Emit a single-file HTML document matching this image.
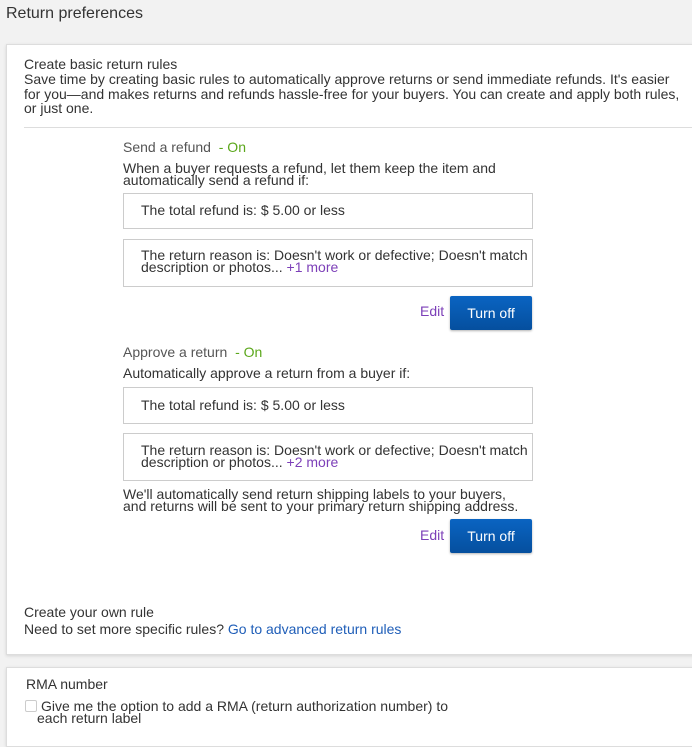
<!DOCTYPE html>
<html><head><meta charset="utf-8"><style>
*{margin:0;padding:0;box-sizing:border-box}
body{width:692px;height:734px;overflow:hidden;background:#f2f2f2;font-family:"Liberation Sans",Arial,sans-serif;font-size:14px;color:#333;position:relative}
.a{position:absolute;white-space:nowrap;line-height:16px}
.panel{position:absolute;left:6px;right:-10px;background:#fff;border:1px solid #ddd;box-shadow:0 1px 3px rgba(0,0,0,.12)}
.box{position:absolute;left:123px;width:410px;border:1px solid #ccc;background:#fff}
.btn{position:absolute;left:450px;width:82px;height:34px;background:linear-gradient(#0a64c2,#054f9e);color:#fff;font-size:14px;line-height:34px;text-align:center;border-radius:2px;box-shadow:0 1px 2px rgba(0,0,0,.3)}
.edit{color:#7c3fb8}
.on{color:#5ba71b}
.tight{line-height:12px}
</style></head><body>
<div class="a" style="left:6px;top:6px;font-size:16px;color:#333">Return preferences</div>
<div class="panel" style="top:44px;height:611px"></div>
<div class="a" style="left:24px;top:56px">Create basic return rules</div>
<div class="a" style="left:24px;top:72px;line-height:14.5px">Save time by creating basic rules to automatically approve returns or send immediate refunds. It's easier<br>for you—and makes returns and refunds hassle-free for your buyers. You can create and apply both rules,<br>or just one.</div>
<div style="position:absolute;left:24px;right:0;top:127px;height:1px;background:#ddd"></div>

<div class="a" style="left:123px;top:139px;color:#555">Send a refund &nbsp;<span class="on">- On</span></div>
<div class="a tight" style="left:123px;top:162px">When a buyer requests a refund, let them keep the item and<br>automatically send a refund if:</div>
<div class="box" style="top:193px;height:36px"></div>
<div class="a" style="left:141px;top:202px">The total refund is: $ 5.00 or less</div>
<div class="box" style="top:239px;height:48px"></div>
<div class="a tight" style="left:141px;top:249px">The return reason is: Doesn't work or defective; Doesn't match<br>description or photos... <span class="edit">+1 more</span></div>
<div class="a edit" style="left:420px;top:303px">Edit</div>
<div class="btn" style="top:296px">Turn off</div>

<div class="a" style="left:123px;top:344px;color:#555">Approve a return &nbsp;<span class="on">- On</span></div>
<div class="a" style="left:123px;top:365px">Automatically approve a return from a buyer if:</div>
<div class="box" style="top:387px;height:37px"></div>
<div class="a" style="left:141px;top:397px">The total refund is: $ 5.00 or less</div>
<div class="box" style="top:433px;height:48px"></div>
<div class="a tight" style="left:141px;top:444px">The return reason is: Doesn't work or defective; Doesn't match<br>description or photos... <span class="edit">+2 more</span></div>
<div class="a tight" style="left:123px;top:488px">We'll automatically send return shipping labels to your buyers,<br>and returns will be sent to your primary return shipping address.</div>
<div class="a edit" style="left:420px;top:527px">Edit</div>
<div class="btn" style="top:519px">Turn off</div>

<div class="a" style="left:24px;top:604px">Create your own rule</div>
<div class="a" style="left:24px;top:621px">Need to set more specific rules? <span style="color:#1f5eb8">Go to advanced return rules</span></div>

<div class="panel" style="top:667px;height:80px"></div>
<div class="a" style="left:26px;top:676px">RMA number</div>
<div style="position:absolute;left:25px;top:700px;width:12px;height:12px;border:1px solid #ccc;border-radius:2px"></div>
<div class="a tight" style="left:41px;top:700px">Give me the option to add a RMA (return authorization number) to</div>
<div class="a tight" style="left:37px;top:712px">each return label</div>
</body></html>
